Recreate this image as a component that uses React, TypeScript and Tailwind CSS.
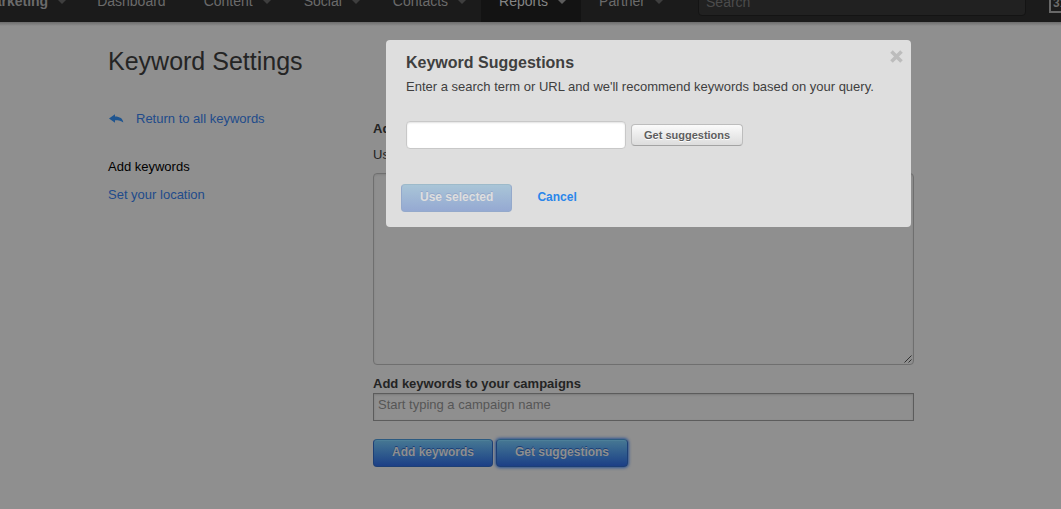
import React, { useState } from "react";
import clsx from "clsx";

interface NavItem {
  label: string;
  hasMenu?: boolean;
  isActive?: boolean;
  isBrand?: boolean;
}

const navItems: NavItem[] = [
  { label: "Marketing", hasMenu: true, isBrand: true },
  { label: "Dashboard" },
  { label: "Content", hasMenu: true },
  { label: "Social", hasMenu: true },
  { label: "Contacts", hasMenu: true },
  { label: "Reports", hasMenu: true, isActive: true },
  { label: "Partner", hasMenu: true },
];

const Caret = ({ isActive }: { isActive?: boolean }) => (
  <svg
    viewBox="0 0 8 4"
    className={clsx("w-2 h-1 mt-0.5 ml-[10px]", isActive ? "text-[#5c5c5c]" : "text-[#3e3e3e]")}
    fill="currentColor"
    aria-hidden="true"
  >
    <path d="M0 0h8L4 4z" />
  </svg>
);

const NavBar = () => (
  <header className="relative h-[22px] flex items-end overflow-hidden bg-[#1b1b1b]">
    <nav className="flex h-[42px] -ml-9 shrink-0">
      {navItems.map((item) => (
        <a
          key={item.label}
          href="#"
          className={clsx(
            "flex items-center pl-[18px] text-sm",
            item.isBrand ? "pr-[13px] font-bold" : item.hasMenu ? "pr-[15px]" : "pr-5",
            item.isActive ? "bg-[#131313] text-[#858585]" : "text-[#6b6b6b]"
          )}
        >
          {item.label}
          {item.hasMenu && <Caret isActive={item.isActive} />}
        </a>
      ))}
    </nav>
    <div className="flex-1 flex items-center h-10 ml-5">
      <input
        type="text"
        aria-label="Search"
        placeholder="Search"
        className="w-full h-7 px-[7px] text-sm rounded-sm border border-[#141414] bg-[#212121] text-[#858585] placeholder:text-[#4c4c4c] outline-none"
      />
    </div>
    <a
      href="#"
      className="shrink-0 w-5 h-5 ml-[23px] mb-[9px] -mr-2 flex items-end pl-0.5 border-2 border-[#686868] text-xs leading-4 font-bold text-[#6b6b6b]"
    >
      31
    </a>
  </header>
);

const BlueButton = ({ children, focused }: { children: React.ReactNode; focused?: boolean }) => (
  <button
    type="button"
    className={clsx(
      "h-7 px-[18px] pb-0.5 rounded border border-[#1d3f75] border-t-[#2c5a80] bg-gradient-to-b from-[#477893] to-[#1d3f86] text-xs font-bold text-[#8f8f8f] [text-shadow:0_-1px_0_#1d3f75]",
      focused
        ? "shadow-[inset_0_1px_0_#4d7f99,0_0_3px_1px_#2f5593]"
        : "shadow-[inset_0_1px_0_#4d7f99]"
    )}
  >
    {children}
  </button>
);

const SuggestionsModal = ({ onClose }: { onClose: () => void }) => {
  const [query, setQuery] = useState("");

  return (
    <div
      role="dialog"
      aria-labelledby="suggestions-title"
      className="absolute top-10 left-[386px] w-[525px] px-5 pt-[13px] pb-[15px] rounded bg-[#dedede] text-[#3f3f3f]"
    >
      <button
        type="button"
        onClick={onClose}
        aria-label="Close"
        className="absolute top-2.5 right-2 text-[#bcbcbc]"
      >
        <svg viewBox="0 0 13 13" className="w-[13px] h-[13px]" stroke="currentColor" strokeWidth="3.6">
          <path d="M1.500 1.500l10 10M11.500 1.500l-10 10" />
        </svg>
      </button>

      <h2 id="suggestions-title" className="text-base leading-5 font-bold">Keyword Suggestions</h2>
      <p className="mt-1 text-[13px] leading-5">
        Enter a search term or URL and we'll recommend keywords based on your query.
      </p>

      <div className="mt-6 flex items-center gap-[5px]">
        <input
          type="text"
          aria-label="Search term or URL"
          value={query}
          onChange={(e) => setQuery(e.target.value)}
          className="w-[220px] h-7 px-2 text-[13px] rounded-sm border border-[#c8c8c8] bg-white shadow-[inset_0_1px_2px_#e2e2e2] outline-none"
        />
        <button
          type="button"
          className="h-[22px] px-3 pb-0.5 rounded-sm border border-[#bdbdbd] border-b-[#a3a3a3] bg-gradient-to-b from-[#fbfbfb] to-[#dcdcdc] text-[11px] font-bold text-[#5e5e5e] [text-shadow:0_1px_0_#ffffff]"
        >
          Get suggestions
        </button>
      </div>

      <div className="mt-[35px] -ml-[5px] flex items-center">
        <button
          type="button"
          className="h-7 px-[18px] pb-0.5 rounded border border-[#94a9cb] border-t-[#9dbaca] bg-gradient-to-b from-[#a9c5d7] to-[#95a9d2] text-xs font-bold text-[#dedede] [text-shadow:0_-1px_0_#94a9cb]"
        >
          Use selected
        </button>
        <button type="button" onClick={onClose} className="ml-[25px] pb-0.5 text-xs font-bold text-[#2a86ea]">
          Cancel
        </button>
      </div>
    </div>
  );
};

const App: React.FC = () => {
  const [isOpen, setIsOpen] = useState(true);

  return (
    <div className="relative min-h-screen bg-[#8f8f8f] font-['Liberation_Sans',Arial,sans-serif] text-[13px] leading-5 text-[#242424]">
      <NavBar />
      <div className="h-1 bg-gradient-to-b from-[#6c6c6c] to-[#8f8f8f]" />

      <div className="pl-[108px] pr-[147px] pt-[19px]">
        <h1 className="text-[25px] leading-8">Keyword Settings</h1>

        <div className="flex">
          {/* Sidebar */}
          <aside className="w-[265px] shrink-0 pt-8 text-[#214b8b]">
            <a href="#" className="flex items-center">
              <svg viewBox="0 0 16 10" className="w-4 h-2.5 mr-3 text-[#1f5590]" fill="currentColor" aria-hidden="true">
                <path d="M1 4.400L7 0.300v2.300C12 2.700 14.800 4.600 15.300 8.600 13.300 6.700 11 6.200 7 6.200v2.500z" />
              </svg>
              Return to all keywords
            </a>
            <ul className="mt-7 space-y-2">
              <li className="text-black">Add keywords</li>
              <li>
                <a href="#">Set your location</a>
              </li>
            </ul>
          </aside>

          {/* Keyword form */}
          <main className="flex-1 pt-[42px]">
            <label htmlFor="keywords" className="block font-bold">Add keywords</label>
            <p className="mt-1.5">Use one line per keyword.</p>
            <textarea
              id="keywords"
              className="block w-full h-48 mt-2 p-1 rounded-sm border border-[#6f6f6f] bg-transparent shadow-[inset_0_1px_2px_#838383] outline-none resize-none"
            />
            <svg viewBox="0 0 8 8" className="block w-2 h-2 -mt-2.5 ml-auto mr-0.5 relative" stroke="#303030" aria-hidden="true">
              <path d="M0.500 7.500l7-7M4.500 7.500l3-3" />
            </svg>

            <label htmlFor="campaigns" className="block mt-[11px] leading-[19px] font-bold">Add keywords to your campaigns</label>
            <input
              id="campaigns"
              type="text"
              placeholder="Start typing a campaign name"
              className="block w-full h-7 px-1 pb-1.5 border border-[#5c5c5c] bg-transparent shadow-[inset_0_1px_2px_#7c7c7c] placeholder:text-[#565656] outline-none"
            />

            <div className="mt-[18px] flex gap-[3px]">
              <BlueButton>Add keywords</BlueButton>
              <BlueButton focused>Get suggestions</BlueButton>
            </div>
          </main>
        </div>
      </div>

      {isOpen && <SuggestionsModal onClose={() => setIsOpen(false)} />}
    </div>
  );
};

export default App;
